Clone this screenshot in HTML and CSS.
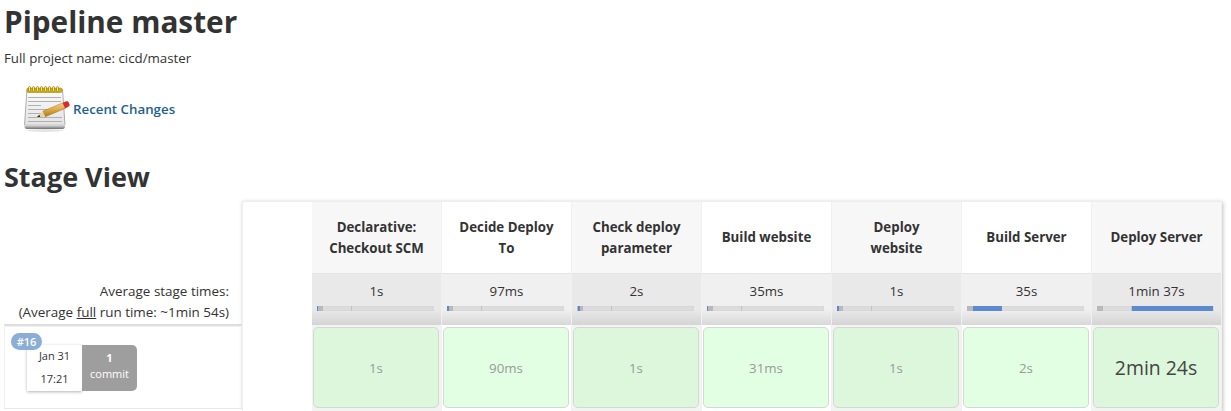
FILE: index.html
```html
<!DOCTYPE html>
<html lang="en">
<head>
<meta charset="utf-8">
<title>Pipeline master</title>
<link rel="stylesheet" href="styles.css">
</head>
<body>
<h1 class="title">Pipeline master</h1>
<p class="full-name">Full project name: cicd/master</p>
<div class="changes">
  <svg class="notepad" width="48" height="48" viewBox="0 0 48 48" aria-hidden="true">
    <defs>
      <linearGradient id="paper" x1="0" y1="0" x2="0" y2="1"><stop offset="0" stop-color="#fdfdfd"/><stop offset="1" stop-color="#e2e2e2"/></linearGradient>
      <linearGradient id="band" x1="0" y1="0" x2="0" y2="1"><stop offset="0" stop-color="#e8e8e8"/><stop offset=".4" stop-color="#bdbdbd"/><stop offset="1" stop-color="#6f6f6f"/></linearGradient>
      <linearGradient id="pencil" x1="0" y1="1" x2="0" y2="0"><stop offset="0" stop-color="#a9781f"/><stop offset=".5" stop-color="#e0a845"/><stop offset="1" stop-color="#f0d28a"/></linearGradient>
    </defs>
    <ellipse cx="23" cy="45.500" rx="18" ry="1.500" fill="#e4e4e4"/>
    <path d="M5 4.500h35.500L43 40H2.500z" fill="url(#paper)" stroke="#8c8c8c" stroke-width=".7"/>
    <path d="M2.500 39.500h40.500v2c0 1.600-.9 2.500-2.500 2.500H5c-1.600 0-2.500-.9-2.500-2.500z" fill="url(#band)"/>
    <rect x="5" y="3" width="35" height="4.500" rx="1.200" fill="#d9b300" stroke="#8f7a10" stroke-width=".5"/>
    <g fill="#f7e58a" stroke="#6e5c00" stroke-width=".5">
      <rect x="6.500" y="1.500" width="2" height="5" rx="1"/><rect x="10.500" y="1.500" width="2" height="5" rx="1"/><rect x="14.500" y="1.500" width="2" height="5" rx="1"/><rect x="18.500" y="1.500" width="2" height="5" rx="1"/><rect x="22.500" y="1.500" width="2" height="5" rx="1"/><rect x="26.500" y="1.500" width="2" height="5" rx="1"/><rect x="30.500" y="1.500" width="2" height="5" rx="1"/><rect x="34.500" y="1.500" width="2" height="5" rx="1"/>
    </g>
    <path d="M6 12.500h33M6 16.500h33M6 20.500h13M6 24.500h28M6 28.500h17M6 32.500h34M6 36.500h34" stroke="#b0b0b0" stroke-width="1" fill="none"/>
    <path d="M20.800 26.200L40.800 17.800 43.200 23.400 23.200 31.800z" fill="url(#pencil)" stroke="#8a6414" stroke-width=".4"/>
    <path d="M15 32L20.800 26.200 23.200 31.800z" fill="#ecd3a0"/>
    <path d="M15 32l2.300-2.300 1 2.300z" fill="#3a2c10"/>
    <path d="M40.800 17.800l3.500-1.500c1-.4 1.900 0 2.300.9l.9 2.100c.4.900 0 1.900-.9 2.300l-3.400 1.800z" fill="#e0262c"/>
  </svg>
  <a class="changes-link" href="#">Recent Changes</a>
</div>
<h2 class="section">Stage View</h2>
<div class="stage-view">
  <div class="side">
    <div class="side-labels">
      <div>Average stage times:</div>
      <div>(Average <u>full</u> run time: ~1min 54s)</div>
    </div>
    <div class="build">
      <span class="badge">#16</span>
      <div class="build-card">
        <div class="build-date"><span>Jan 31</span><span>17:21</span></div>
        <div class="build-commit"><b>1</b><span>commit</span></div>
      </div>
    </div>
  </div>
  <div class="table">
    <div class="blank"></div>
    <div class="stage odd">
      <div class="head">Declarative: Checkout SCM</div>
      <div class="avg"><span>1s</span><div class="bar"><i class="fill" style="left:0;width:1px"></i></div></div>
      <div class="cell dark"><div class="box">1s</div></div>
    </div>
    <div class="stage even">
      <div class="head">Decide Deploy To</div>
      <div class="avg"><span>97ms</span><div class="bar"><i class="fill" style="left:0;width:2px"></i></div></div>
      <div class="cell"><div class="box">90ms</div></div>
    </div>
    <div class="stage odd">
      <div class="head">Check deploy parameter</div>
      <div class="avg"><span>2s</span><div class="bar"><i class="fill" style="left:1px;width:2px"></i></div></div>
      <div class="cell dark"><div class="box">1s</div></div>
    </div>
    <div class="stage even">
      <div class="head">Build website</div>
      <div class="avg"><span>35ms</span><div class="bar"><i class="fill" style="left:0;width:1px"></i></div></div>
      <div class="cell"><div class="box">31ms</div></div>
    </div>
    <div class="stage odd">
      <div class="head">Deploy website</div>
      <div class="avg"><span>1s</span><div class="bar"><i class="fill" style="left:0;width:2px"></i></div></div>
      <div class="cell dark"><div class="box">1s</div></div>
    </div>
    <div class="stage even">
      <div class="head">Build Server</div>
      <div class="avg"><span>35s</span><div class="bar"><i class="fill" style="left:6px;width:29px"></i></div></div>
      <div class="cell"><div class="box">2s</div></div>
    </div>
    <div class="stage odd">
      <div class="head">Deploy Server</div>
      <div class="avg"><span>1min 37s</span><div class="bar"><i class="fill" style="left:35px;width:81px"></i></div></div>
      <div class="cell dark"><div class="box big">2min 24s</div></div>
    </div>
  </div>
</div>
</body>
</html>
```
FILE: styles.css
```css
* { box-sizing: border-box; }
html, body { margin: 0; height: 411px; overflow: hidden; }
body {
  background: #fff;
  color: #333;
  font-family: "Open Sans", "Noto Sans", sans-serif;
  font-size: 13.3px;
  line-height: 18px;
}
.title {
  margin: 0;
  padding: 3px 0 0 4px;
  height: 49px;
  font-size: 29.75px;
  line-height: 38px;
  font-weight: 700;
  color: #333;
}
.full-name { margin: 0; padding-left: 4px; height: 36px; line-height: 19px; }
.changes {
  display: flex;
  align-items: center;
  height: 48px;
  margin-left: 22px;
  gap: 3px;
}
.notepad { display: block; flex: none; }
.changes-link { color: #1d5f8f; font-weight: 600; text-decoration: none; margin-top: -1px; }
.section {
  margin: 0;
  padding: 26px 0 0 4px;
  height: 68px;
  font-size: 27px;
  line-height: 36px;
  font-weight: 700;
  color: #333;
}
.stage-view { display: flex; padding-left: 4px; }
.side { width: 238px; flex: none; padding-top: 76px; }
.side-labels {
  height: 47px;
  padding-right: 13px;
  text-align: right;
  font-size: 13.45px;
  line-height: 21px;
  padding-top: 4px;
  white-space: nowrap;
}
.build {
  position: relative;
  height: 85px;
  border-top: 2px solid #ddd;
  border-left: 1px solid #eee;
  border-bottom: 1px solid #e8e8e8;
  box-shadow: inset 0 1px 0 #f2f2f2, 0 2px 0 #fff, 0 3px 0 #eee;
}
.badge {
  position: absolute;
  left: 6px;
  top: 7px;
  width: 31px;
  height: 17px;
  border-radius: 9px;
  background: #8aaed6;
  color: #fff;
  font-size: 11px;
  font-weight: 600;
  line-height: 17px;
  text-align: center;
  z-index: 1;
}
.build-card {
  display: flex;
  margin: 19px 0 0 22px;
  width: 110px;
  height: 46px;
  font-size: 11px;
}
.build-date {
  width: 55px;
  background: #fff;
  box-shadow: 0 1px 3px rgba(0,0,0,.3);
  display: flex;
  flex-direction: column;
  align-items: center;
  justify-content: space-between;
  padding: 2px 0 3px;
  line-height: 18px;
}
.build-commit {
  width: 55px;
  background: #9e9e9e;
  color: #fff;
  border-radius: 0 5px 5px 0;
  display: flex;
  flex-direction: column;
  align-items: center;
  line-height: 16px;
  padding-top: 5px;
}
.table {
  display: flex;
  width: 980px;
  height: 210px;
  border-top: 1px solid #eee;
  border-left: 1px solid #eee;
  box-shadow: 1px 1px 4px rgba(0,0,0,.25);
}
.blank { width: 69px; flex: none; background: #fff; }
.stage { width: 130px; flex: none; display: flex; flex-direction: column; border-right: 1px solid #f0f0f0; }
.head {
  height: 71px;
  display: flex;
  align-items: center;
  justify-content: center;
  text-align: center;
  padding: 0 15px;
  font-weight: 700;
  line-height: 21px;
}
.odd .head { background: #f7f7f7; }
.even .head { background: #fff; }
.avg {
  height: 52px;
  padding: 8px 7px 0 5px;
  text-align: center;
  line-height: 18px;
  border-top: 1px solid #e4e4e4;
  background: linear-gradient(#f0f0f0 0, #f0f0f0 70%, #d8d8d8 100%);
}
.odd .avg { background: linear-gradient(#e9e9e9 0, #e9e9e9 70%, #d4d4d4 100%); }
.avg span { display: block; padding-left: 2px; }
.bar {
  position: relative;
  height: 5px;
  margin-top: 6px;
  background: linear-gradient(to right, #b9b9b9 0, #b9b9b9 6px, #dcdcdc 6px, #dcdcdc 34px, #c4c4c4 34px, #c4c4c4 35px, #dcdcdc 35px);
  box-shadow: inset 0 0 1px #bbb;
}
.fill { position: absolute; top: 0; bottom: 0; background: #5b8ad0; }
.cell { flex: 1; padding: 2px 2px 2px 1px; background: #fff; }
.cell.dark { background: #f3f3f3; }
.box {
  height: 81px;
  border: 1px solid #d2d9d2;
  border-radius: 5px;
  background: #e3ffe3;
  color: #9a9a9a;
  display: flex;
  align-items: center;
  justify-content: center;
}
.dark .box { background: #dcf7dc; }
.box.big { color: #444; font-size: 19.4px; }
```
